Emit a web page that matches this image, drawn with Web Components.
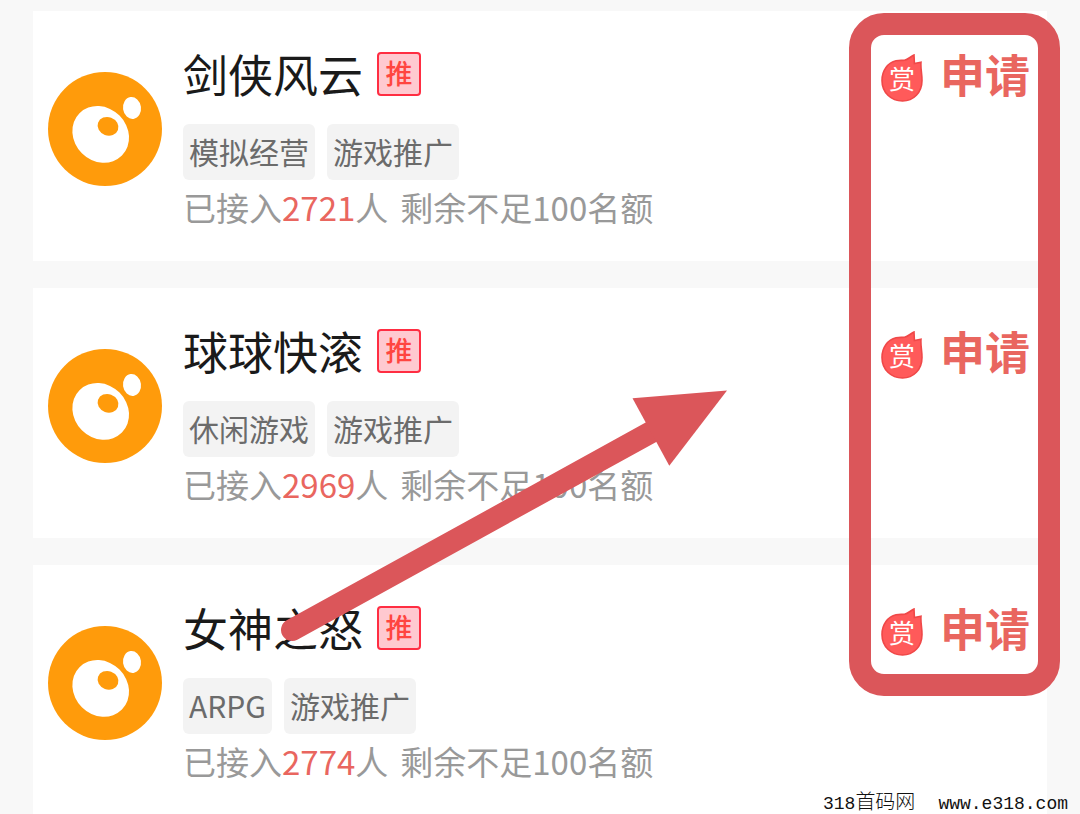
<!DOCTYPE html>
<html lang="zh-CN">
<head>
<meta charset="utf-8">
<meta name="viewport" content="width=device-width, initial-scale=1">
<title>游戏推广</title>
<style>
  :root {
    --color-page: #f8f8f8;
    --color-card: #fff;
    --color-title: #1a1a1a;
    --color-tag: #6b6b6b;
    --color-tag-bg: #f3f3f3;
    --color-muted: #999;
    --color-accent: #e9665f;
    --color-mark: #db565a;
    --color-logo: #ff9b0b;
  }

  body {
    margin: 0;
    background: var(--color-page);
    font-family: "Noto Sans CJK SC", sans-serif;
    overflow: hidden;
  }
</style>
</head>
<body>
<promo-page>
  <game-card name="剑侠风云" joined="2721">
    <game-tag>模拟经营</game-tag>
    <game-tag>游戏推广</game-tag>
  </game-card>
  <game-card name="球球快滚" joined="2969">
    <game-tag>休闲游戏</game-tag>
    <game-tag>游戏推广</game-tag>
  </game-card>
  <game-card name="女神之怒" joined="2774">
    <game-tag>ARPG</game-tag>
    <game-tag>游戏推广</game-tag>
  </game-card>
  <mark-arrow slot="overlay"></mark-arrow>
  <mark-frame slot="overlay"></mark-frame>
  <site-credit slot="overlay"></site-credit>
</promo-page>

<script>
function render(host, html) {
  host.attachShadow({ mode: 'open' }).innerHTML = html;
}

class PromoPage extends HTMLElement {
  constructor() {
    super();
    render(this, `
      <style>
        :host {
          display: block;
          position: relative;
          height: 100vh;
          overflow: hidden;
        }

        main {
          display: flex;
          flex-direction: column;
          gap: 27px;
          padding: 11px 33px;
        }
      </style>
      <main><slot></slot></main>
      <slot name="overlay"></slot>
    `);
  }
}

class GameTag extends HTMLElement {
  constructor() {
    super();
    render(this, `
      <style>
        :host {
          display: block;
          padding: 0 6px 2px;
          border-radius: 6px;
          background: var(--color-tag-bg);
          color: var(--color-tag);
          font-size: 30px;
          line-height: 54px;
          white-space: nowrap;
        }
      </style>
      <slot></slot>
    `);
  }
}

class GameLogo extends HTMLElement {
  constructor() {
    super();
    render(this, `
      <style>
        :host { display: block; }
        svg { display: block; width: 114px; height: 114px; }
      </style>
      <svg viewBox="0 0 114 114" aria-hidden="true">
        <circle cx="57" cy="57" r="57" fill="var(--color-logo)"/>
        <ellipse cx="52.7" cy="62.4" rx="30" ry="26.6" transform="rotate(45 52.7 62.4)" fill="#fff"/>
        <ellipse cx="60" cy="54.3" rx="10.6" ry="9.2" transform="rotate(20 60 54.3)" fill="var(--color-logo)"/>
        <ellipse cx="84" cy="36" rx="9" ry="11" transform="rotate(-8 84 36)" fill="#fff"/>
      </svg>
    `);
  }
}

class RewardBadge extends HTMLElement {
  constructor() {
    super();
    render(this, `
      <style>
        :host {
          display: grid;
          place-items: center;
          color: #fff;
          font-size: 26px;
          line-height: 48px;
        }

        svg, span { grid-area: 1 / 1; }
        svg { width: 42px; height: 48px; }
      </style>
      <svg viewBox="0 0 42 48" aria-hidden="true">
        <path d="M15 6.8C20 6.2 20 6.6 23.5 6.2C27 5.4 29 3 33 1L33.4 9.6L40 8.2C39.4 14 41 19 41 26.5C41 38.5 32.5 47 21.5 47C10 47 1 38.5 1 26.5C1 16.5 7 8.6 15 6.8Z" fill="#ff5a5a" stroke="#f04848" stroke-width="1.6"/>
      </svg>
      <span>赏</span>
    `);
  }
}

class GameCard extends HTMLElement {
  constructor() {
    super();
    render(this, `
      <style>
        :host {
          display: flex;
          align-items: flex-start;
          gap: 21px;
          padding: 33px 17px 27px 15px;
          background: var(--color-card);
        }

        game-logo { margin-top: 28px; }
        .info { flex: 1; }

        .heading {
          display: flex;
          align-items: center;
          gap: 14px;
          height: 60px;
        }

        h2 {
          margin: 0;
          color: var(--color-title);
          font-size: 45px;
          font-weight: 400;
          line-height: 60px;
        }

        .hot {
          box-sizing: border-box;
          width: 44px;
          height: 44px;
          border: 2px solid #ff2d42;
          border-radius: 4px;
          background: #ffc9d0;
          color: #ff4540;
          font-size: 27px;
          font-weight: 500;
          line-height: 38px;
          text-align: center;
        }

        .tags {
          display: flex;
          gap: 12px;
          margin-top: 20px;
        }

        p {
          display: flex;
          margin: 0;
          color: var(--color-muted);
          font-size: 33px;
          line-height: 54px;
          white-space: nowrap;
        }

        .joined { color: var(--color-accent); }
        .left { margin-left: 12px; }

        button {
          display: flex;
          align-items: flex-start;
          gap: 17px;
          padding: 0;
          border: 0;
          background: none;
          color: var(--color-accent);
          font: inherit;
          font-size: 45px;
          font-weight: 700;
          line-height: 60px;
        }

        reward-badge {
          margin-top: 10px;
          font-weight: 400;
        }
      </style>
      <game-logo></game-logo>
      <div class="info">
        <div class="heading"><h2></h2><span class="hot">推</span></div>
        <div class="tags"><slot></slot></div>
        <p><span>已接入</span><span class="joined"></span><span>人</span><span class="left">剩余不足100名额</span></p>
      </div>
      <button type="button"><reward-badge></reward-badge><span>申请</span></button>
    `);
  }

  connectedCallback() {
    this.shadowRoot.querySelector('h2').textContent = this.getAttribute('name');
    this.shadowRoot.querySelector('.joined').textContent = this.getAttribute('joined');
  }
}

// Hand-drawn style markers that lie over the list
class MarkArrow extends HTMLElement {
  constructor() {
    super();
    render(this, `
      <style>
        :host {
          position: absolute;
          left: 280px;
          top: 390px;
          pointer-events: none;
        }
        svg { display: block; width: 448px; height: 252px; }
      </style>
      <svg viewBox="280 390 448 252" aria-hidden="true">
        <path d="M292 630L655 430" stroke="var(--color-mark)" stroke-width="22" stroke-linecap="round"/>
        <path d="M632.5 398.3L727 390.5L669.3 465.7Z" fill="var(--color-mark)"/>
      </svg>
    `);
  }
}

class MarkFrame extends HTMLElement {
  constructor() {
    super();
    render(this, `
      <style>
        :host {
          position: absolute;
          top: 13px;
          right: 20px;
          box-sizing: border-box;
          width: 211px;
          height: 683px;
          border: 22px solid var(--color-mark);
          border-radius: 35px;
          pointer-events: none;
        }
      </style>
    `);
  }
}

class SiteCredit extends HTMLElement {
  constructor() {
    super();
    render(this, `
      <style>
        :host {
          position: absolute;
          right: 12px;
          bottom: 0;
          display: flex;
          gap: 23px;
          color: #111;
          font-family: "Liberation Mono", "Noto Sans CJK SC", monospace;
          font-size: 18px;
          font-weight: 300;
          line-height: 20px;
        }
        .zh { font-size: 20px; }
        a { color: inherit; text-decoration: none; }
      </style>
      <span>318<span class="zh">首码网</span></span>
      <a href="#">www.e318.com</a>
    `);
  }
}

customElements.define('game-tag', GameTag);
customElements.define('game-logo', GameLogo);
customElements.define('reward-badge', RewardBadge);
customElements.define('game-card', GameCard);
customElements.define('mark-arrow', MarkArrow);
customElements.define('mark-frame', MarkFrame);
customElements.define('site-credit', SiteCredit);
customElements.define('promo-page', PromoPage);
</script>
</body>
</html>
